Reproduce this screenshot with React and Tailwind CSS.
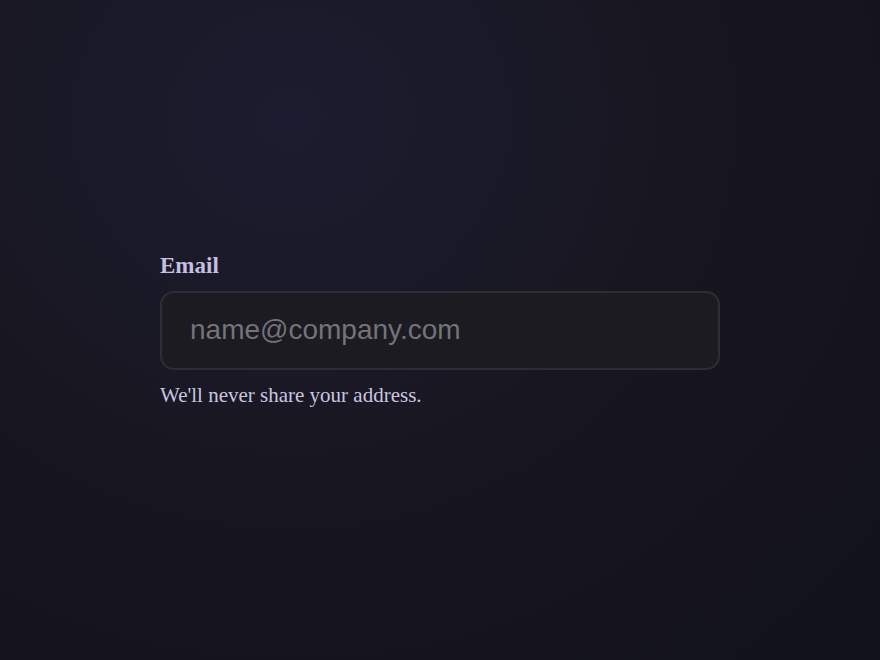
import React from 'react';

const App = () => {
  return (
    <div className="h-screen w-full flex flex-col justify-center items-center bg-[#13131b] bg-[radial-gradient(ellipse_at_33%_18%,#1d1c30_0%,#17161f_50%,#12121a_100%)]">
      <div className="w-[560px] flex flex-col">
        <label
          htmlFor="email"
          className="block text-[23px] leading-[28px] font-bold text-[#c4bee0] mb-[11px] font-['Liberation_Serif',serif]"
        >
          Email
        </label>
        <input
          id="email"
          type="email"
          placeholder="name@company.com"
          className="h-[79px] w-full rounded-[14px] border-2 border-[#2d2d33] bg-[#1b1b21] px-[28px] text-[28px] text-[#d0d0d8] placeholder:text-[#737378] outline-none font-['Liberation_Sans',sans-serif]"
        />
        <p className="mt-[11px] text-[21px] leading-[28px] text-[#c9c5e0] font-['Liberation_Serif',serif]">
          We'll never share your address.
        </p>
      </div>
    </div>
  );
};

export default App;
